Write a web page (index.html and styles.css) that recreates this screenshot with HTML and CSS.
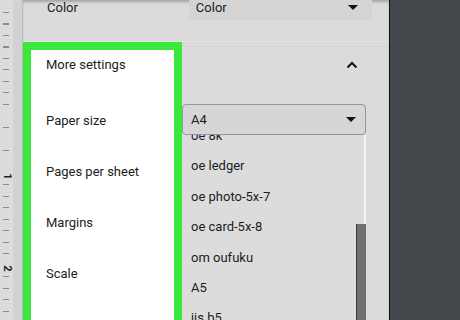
FILE: index.html
```html
<!DOCTYPE html>
<html lang="en">
<head>
<meta charset="utf-8">
<link rel="stylesheet" href="styles.css">
</head>
<body>
<div class="ruler">
    <div class="ruler-strip">
        <span class="ruler-num one">1</span>
        <span class="ruler-num two">2</span>
    </div>
</div>

<div class="panel">
    <div class="color-row">
        <span class="label">Color</span>
        <div class="top-select">
            <span>Color</span>
            <span class="arrow"></span>
        </div>
    </div>

    <div class="settings">
        <div class="more-box">
            <div class="more-inner">
                <div class="more-title">More settings</div>
                <div class="opt">Paper size</div>
                <div class="opt">Pages per sheet</div>
                <div class="opt">Margins</div>
                <div class="opt">Scale</div>
                <div class="opt">Options</div>
            </div>
        </div>

        <div class="controls">
            <div class="chevron-row">
                <svg width="12" height="8" viewBox="0 0 12 8"><path d="M1.5 6.5 L6 2 L10.5 6.5" fill="none" stroke="#111" stroke-width="2"/></svg>
            </div>
            <div class="paper-select">
                <span>A4</span>
                <span class="arrow"></span>
            </div>
            <div class="dropdown">
                <div class="items">
                    <div class="item">oe 8k</div>
                    <div class="item">oe ledger</div>
                    <div class="item">oe photo-5x-7</div>
                    <div class="item">oe card-5x-8</div>
                    <div class="item">om oufuku</div>
                    <div class="item">A5</div>
                    <div class="item">jis b5</div>
                </div>
                <div class="scrollbar">
                    <div class="thumb"></div>
                </div>
            </div>
        </div>
    </div>
</div>

<div class="desk"></div>
</body>
</html>
```

FILE: styles.css
```css
body {
    margin: 0;
    width: 460px;
    height: 320px;
    overflow: hidden;
    display: flex;
    font-family: Roboto, "Liberation Sans", sans-serif;
    font-size: 13px;
    color: #1c1c1c;
    background-color: #dbdbdb;
}

/* left ruler */
.ruler {
    width: 22px;
    background-color: #d2d2d2;
    border-right: 1px solid #bdbdbd;
    position: relative;
}

.ruler-strip {
    width: 13px;
    height: 100%;
    background-color: #dcdcdc;
    background-image: repeating-linear-gradient(to bottom, transparent 0, transparent 10px, #8a8a8a 10px, #8a8a8a 11px, transparent 11px, transparent 11.5px);
    background-size: 6px 100%;
    background-position: 3px 2px;
    background-repeat: no-repeat;
}

.ruler-num {
    position: absolute;
    left: 3px;
    width: 8px;
    text-align: center;
    font-size: 11px;
    font-weight: bold;
    color: #222;
    background-color: #dcdcdc;
    transform: rotate(90deg);
}

.ruler-num.one {
    top: 170px;
}

.ruler-num.two {
    top: 262px;
}

/* main print panel */
.panel {
    width: 366px;
    border-right: 1px solid #111;
    background-color: #dbdbdb;
    display: flex;
    flex-direction: column;
    box-shadow: inset 0 3px 3px -1px rgba(0, 0, 0, 0.25);
}

.color-row {
    height: 41px;
    display: flex;
    align-items: flex-start;
    border-bottom: 1px solid #e4e4e4;
}

.label {
    margin-left: 24px;
    line-height: 15px;
}

.top-select {
    margin-left: 111px;
    width: 162px;
    height: 20px;
    padding: 0 14px 0 7px;
    display: flex;
    justify-content: space-between;
    align-items: flex-start;
    line-height: 15px;
    background-color: #d4d4d4;
}

.arrow {
    width: 0;
    height: 0;
    border-left: 5px solid transparent;
    border-right: 5px solid transparent;
    border-top: 5px solid #111;
}

.top-select .arrow {
    margin-top: 5px;
}

.settings {
    flex: 1;
    display: flex;
    min-height: 0;
}

.more-box {
    width: 143px;
    border: 8px solid #3de63c;
    border-bottom: none;
    background-color: #ffffff;
}

.more-inner {
    padding-left: 15px;
}

.more-title {
    line-height: 30px;
    margin-bottom: 15px;
}

.opt {
    height: 51px;
    line-height: 51px;
}

.controls {
    width: 184px;
    display: flex;
    flex-direction: column;
}

.chevron-row {
    height: 45px;
    margin-bottom: 17px;
    display: flex;
    justify-content: flex-end;
    align-items: center;
    padding-right: 8px;
}

.paper-select {
    height: 29px;
    border: 1px solid #8b97aa;
    border-radius: 4px;
    padding: 0 9px 0 8px;
    display: flex;
    justify-content: space-between;
    align-items: center;
    background-color: #d6d6d6;
    position: relative;
    z-index: 1;
}

.dropdown {
    flex: 1;
    min-height: 0;
    display: flex;
    overflow: hidden;
    background-color: #dcdcdc;
}

.items {
    flex: 1;
    margin-top: -14px;
    padding-left: 9px;
}

.item {
    height: 30.4px;
    line-height: 30.4px;
}

.scrollbar {
    width: 10px;
    padding-top: 89px;
    border-right: 2px solid #f4f6fb;
    box-sizing: border-box;
}

.thumb {
    height: 200px;
    margin-right: -2px;
    background-color: #6f6f71;
    border-left: 1px solid #3a3a3a;
}

/* dark desk area */
.desk {
    flex: 1;
    background-color: #44474b;
}
```
